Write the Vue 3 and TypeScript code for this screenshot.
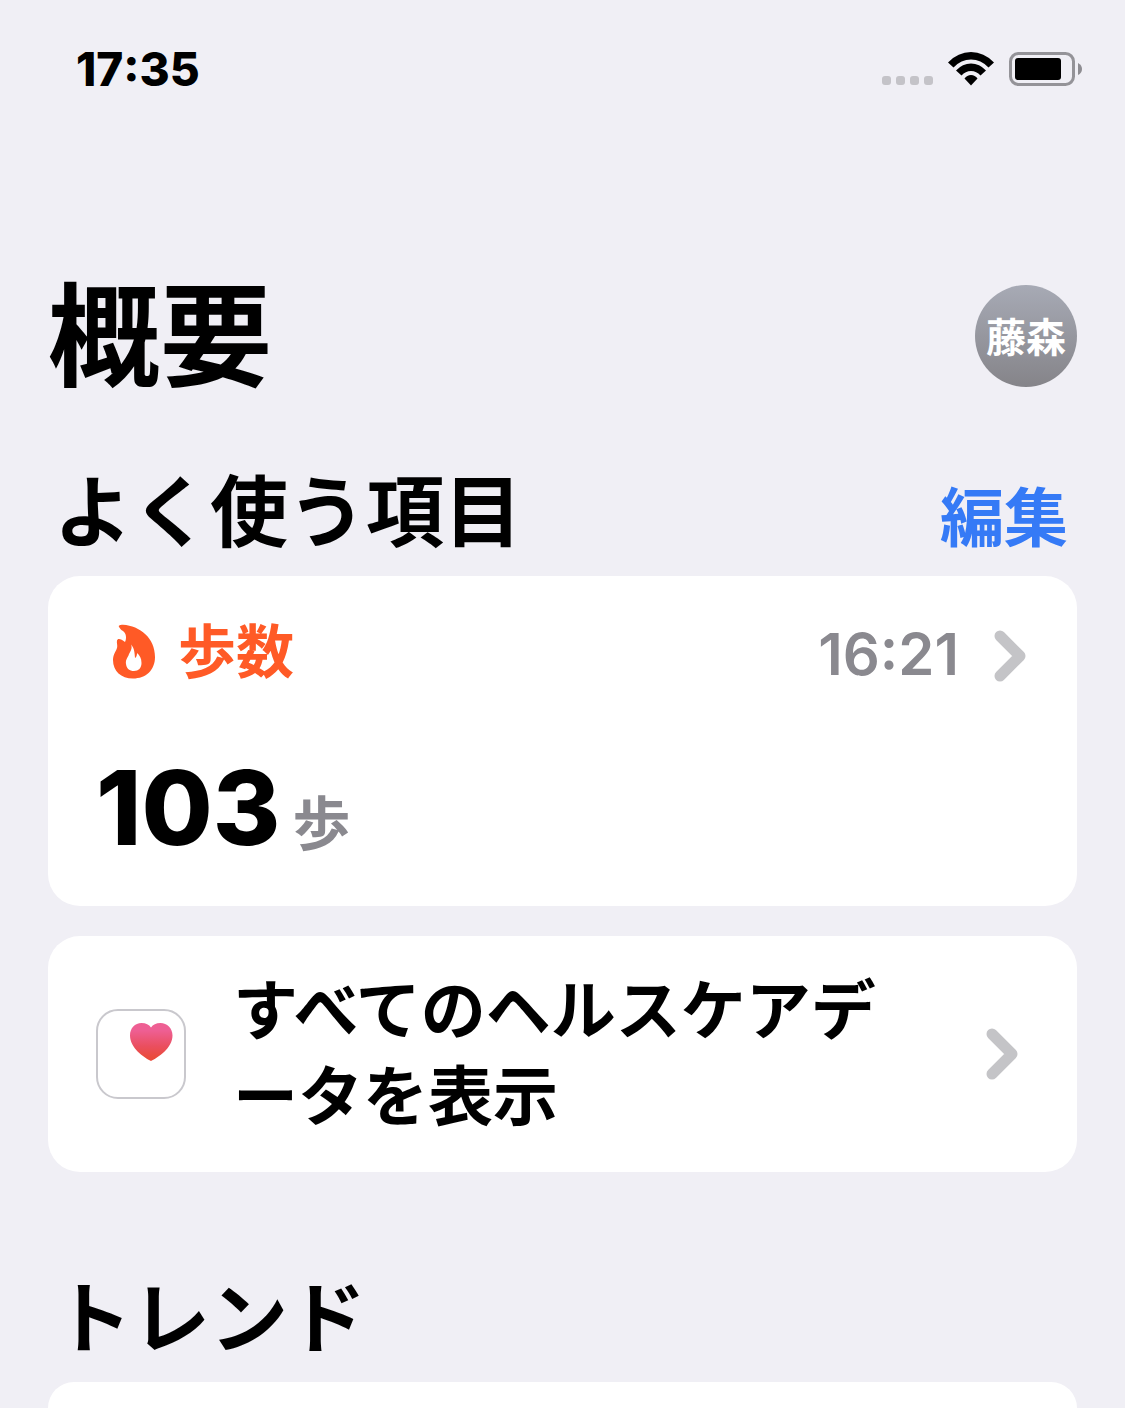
<script setup lang="ts">
import { ref } from 'vue'

const clock = ref('17:35')
const initials = ref('藤森')
const steps = ref({ label: '歩数', time: '16:21', count: 103, unit: '歩' })
</script>

<template>
  <div class="screen" lang="ja">
    <header class="status">
      <time class="clock">{{ clock }}</time>
      <div class="indicators">
        <div class="dots"><i v-for="n in 4" :key="n"></i></div>
        <svg class="wifi" width="46" height="34" viewBox="0 0 46 34" aria-hidden="true">
          <path d="M0 10.500Q10 0 23 0T46 10.500L40.500 15.500Q33 7.500 23 7.500T5.500 15.500Z" />
          <path d="M8 18.500Q14.500 11.500 23 11.500T38 18.500L32.500 23.500Q28.500 19 23 19T13.500 23.500Z" />
          <path d="M16.500 26.500Q19 23 23 23T29.500 26.500L23 33.500Z" />
        </svg>
        <svg class="battery" width="74" height="34" viewBox="0 0 74 34" aria-hidden="true">
          <rect x="1.500" y="1.500" width="63" height="31" rx="8" fill="none" stroke="#949398" stroke-width="3" />
          <rect x="6" y="6" width="46" height="22" rx="3" />
          <path d="M69 11Q73 13 73 17T69 23Z" fill="#8e8d92" />
        </svg>
      </div>
    </header>

    <main>
      <div class="title-row">
        <h1>概要</h1>
        <button class="avatar" type="button">{{ initials }}</button>
      </div>

      <section>
        <div class="section-head">
          <h2>よく使う項目</h2>
          <button class="edit" type="button">編集</button>
        </div>

        <a class="card steps" href="#steps">
          <div class="steps-head">
            <svg class="flame" width="44" height="56" viewBox="0 0 44 56" aria-hidden="true">
              <path
                fill="#ff5a26"
                fill-rule="evenodd"
                d="M7 3C6 1.500 8 0.500 11 0.800C28 2 43 14 43 33C43 46 34 54.500 21 54.500C9 54.500 1 47 1 36C1 30 4.500 27 5.200 23C5.500 20.500 4.500 19 5 16.500C5.500 14 9 14.500 13 18C15 14 14 9 11 7C9 6 8 4.500 7 3ZM19 20.500C21 25 17.500 28 16.500 31.500C15 34.500 13.500 36 14 40C14.500 44.500 17.500 47 22 47C26.500 47 29.500 44 29.500 39C29.500 34 27.500 31 25 29C25 31.500 24.500 33 23 34C22.500 29 22.500 24 19 20.500Z"
              />
            </svg>
            <span class="steps-label">{{ steps.label }}</span>
            <time class="steps-time">{{ steps.time }}</time>
            <svg class="chevron" width="34" height="52" viewBox="0 0 34 52" aria-hidden="true">
              <path d="M7 6L27 26L7 46" />
            </svg>
          </div>
          <div class="steps-value">
            <strong class="count">{{ steps.count }}</strong>
            <span class="unit">{{ steps.unit }}</span>
          </div>
        </a>

        <a class="card all-data" href="#all">
          <span class="app-icon">
            <svg width="44" height="40" viewBox="0 0 44 40" aria-hidden="true">
              <defs>
                <linearGradient id="heart" x1="0" y1="0" x2="0" y2="1">
                  <stop offset="0.200" stop-color="#ee5f93" />
                  <stop offset="0.600" stop-color="#ea4f60" />
                  <stop offset="0.900" stop-color="#ea4b3c" />
                </linearGradient>
              </defs>
              <path
                fill="url(#heart)"
                d="M22 38C15 34.500 1 25 1 12.500C1 5 6 0 12.500 0C17 0 20 1.500 22 4.500C24 1.500 27 0 31.500 0C38 0 43.500 5 43.500 12.500C43.500 25 29 34.500 22 38Z"
              />
            </svg>
          </span>
          <span class="all-label">すべてのヘルスケアデータを表示</span>
          <svg class="chevron" width="34" height="52" viewBox="0 0 34 52" aria-hidden="true">
            <path d="M7 6L27 26L7 46" />
          </svg>
        </a>
      </section>

      <section class="trends">
        <div class="section-head">
          <h2>トレンド</h2>
        </div>
        <div class="card trend-card"></div>
      </section>
    </main>
  </div>
</template>

<style>
body {
  background: #f0eff5;
}
</style>

<style scoped>
* {
  box-sizing: border-box;
}

.screen {
  display: flex;
  flex-direction: column;
  min-height: 100vh;
  background: #f0eff5;
  color: #000;
  font-family: Inter, 'Noto Sans CJK JP', sans-serif;
}

h1,
h2 {
  margin: 0;
  font-weight: 700;
}

button {
  padding: 0;
  border: 0;
  background: none;
  font-family: inherit;
  cursor: pointer;
}

a {
  color: inherit;
  text-decoration: none;
}

.status {
  display: flex;
  justify-content: space-between;
  align-items: center;
  height: 138px;
  padding: 0 42px 0 76px;
}

.clock {
  font-size: 46px;
  line-height: 56px;
  font-weight: 800;
  font-kerning: none;
}

.indicators {
  display: flex;
  align-items: flex-end;
  gap: 15px;
}

.dots {
  display: flex;
  gap: 5px;
  padding-bottom: 1px;
}

.dots i {
  width: 9px;
  height: 9px;
  border-radius: 3px;
  background: #c4c3c8;
}

main {
  display: flex;
  flex: 1;
  flex-direction: column;
  padding: 143px 48px 0;
}

.title-row {
  display: flex;
  justify-content: space-between;
  align-items: center;
}

h1 {
  font-size: 112px;
  line-height: 112px;
}

.avatar {
  width: 102px;
  height: 102px;
  margin-bottom: 2px;
  padding-top: 4px;
  border-radius: 50%;
  background: linear-gradient(#a7aab5, #858489);
  color: #fff;
  font-size: 40px;
  line-height: 40px;
  font-weight: 700;
}

.section-head {
  display: flex;
  justify-content: space-between;
  align-items: flex-end;
  margin-top: 80px;
  padding: 0 9px 0 6px;
}

h2 {
  font-size: 78px;
  line-height: 80px;
}

.edit {
  color: #357af6;
  font-size: 64px;
  line-height: 70px;
  font-weight: 700;
}

.card {
  display: block;
  border-radius: 32px;
  background: #fff;
}

.steps {
  margin-top: 23px;
  padding: 40px 50px 52px 48px;
}

.steps-head {
  display: flex;
  align-items: center;
  padding-left: 16px;
}

.steps-label {
  flex: 1;
  margin-left: 22px;
  color: #ff5a26;
  font-size: 58px;
  line-height: 72px;
  font-weight: 700;
}

.steps-time {
  margin-right: 34px;
  padding-top: 4px;
  color: #8a898f;
  font-size: 58px;
  line-height: 68px;
  font-weight: 600;
}

.chevron {
  flex: none;
  fill: none;
  stroke: #c4c4c7;
  stroke-width: 11px;
  stroke-linecap: round;
  stroke-linejoin: round;
}

.steps-head .chevron {
  margin-top: 8px;
}

.steps-value {
  display: flex;
  align-items: baseline;
  gap: 12px;
  margin-top: 74px;
}

.count {
  font-size: 103px;
  line-height: 92px;
  font-weight: 800;
  font-kerning: none;
}

.unit {
  color: #8a898f;
  font-size: 58px;
  line-height: 60px;
  font-weight: 700;
}

.all-data {
  display: flex;
  align-items: center;
  margin-top: 30px;
  padding: 32px 58px 32px 48px;
}

.app-icon {
  display: flex;
  flex: none;
  justify-content: flex-end;
  width: 90px;
  height: 90px;
  padding: 12px 11px;
  border: 2px solid #c9c8cd;
  border-radius: 22px;
}

.all-label {
  flex: 1;
  margin: 0 80px 0 47px;
  font-size: 65px;
  line-height: 86px;
  font-weight: 700;
}

.trends {
  display: flex;
  flex: 1;
  flex-direction: column;
}

.trends .section-head {
  margin-top: 107px;
}

.trend-card {
  flex: 1;
  min-height: 24px;
  margin-top: 23px;
  border-radius: 32px 32px 0 0;
}
</style>
